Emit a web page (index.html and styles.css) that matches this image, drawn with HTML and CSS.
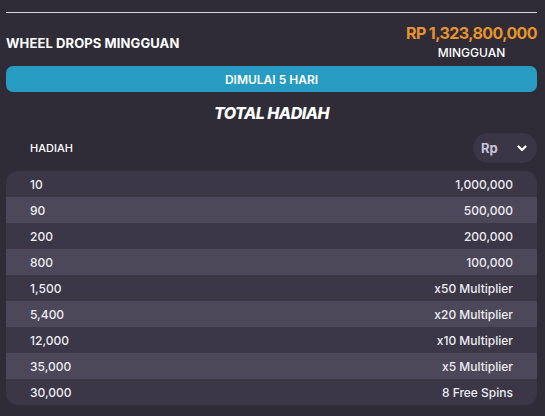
FILE: index.html
```html
<!DOCTYPE html>
<html lang="id">
<head>
<meta charset="utf-8">
<link rel="stylesheet" href="styles.css">
</head>
<body>
<div class="panel">
  <hr class="rule">
  <div class="header">
    <div class="title">WHEEL DROPS MINGGUAN</div>
    <div class="prize">
      <div class="amount">RP 1,323,800,000</div>
      <div class="period">MINGGUAN</div>
    </div>
  </div>
  <div class="start-btn">DIMULAI 5 HARI</div>
  <div class="total">TOTAL HADIAH</div>
  <div class="table-head">
    <div class="th-label">HADIAH</div>
    <div class="currency">
      <span>Rp</span>
      <svg width="10" height="7" viewBox="0 0 10 7"><path d="M1.5 1.5 L5 5 L8.5 1.5" fill="none" stroke="#ffffff" stroke-width="2.2" stroke-linecap="round" stroke-linejoin="round"/></svg>
    </div>
  </div>
  <div class="table">
    <div class="row"><span>10</span><span>1,000,000</span></div>
    <div class="row"><span>90</span><span>500,000</span></div>
    <div class="row"><span>200</span><span>200,000</span></div>
    <div class="row"><span>800</span><span>100,000</span></div>
    <div class="row"><span>1,500</span><span>x50 Multiplier</span></div>
    <div class="row"><span>5,400</span><span>x20 Multiplier</span></div>
    <div class="row"><span>12,000</span><span>x10 Multiplier</span></div>
    <div class="row"><span>35,000</span><span>x5 Multiplier</span></div>
    <div class="row"><span>30,000</span><span>8 Free Spins</span></div>
  </div>
</div>
</body>
</html>
```
FILE: styles.css
```css
html, body {
  margin: 0;
  padding: 0;
  background: #2f2c38;
  height: 100%;
}
body {
  font-family: Inter, "Noto Sans", sans-serif;
  color: #ffffff;
}
.panel {
  padding: 12px 8px 0 6px;
}
.rule {
  border: 0;
  height: 1px;
  background: #d8d4e0;
  margin: 0;
}
.header {
  display: flex;
  justify-content: space-between;
  align-items: flex-start;
  margin-top: 11px;
}
.title {
  font-weight: 700;
  font-size: 13px;
  letter-spacing: 0.1px;
  margin-top: 11px;
}
.prize {
  display: flex;
  flex-direction: column;
  align-items: center;
}
.amount {
  color: #e8942d;
  font-weight: 700;
  font-size: 16px;
  letter-spacing: -0.6px;
  line-height: 19px;
}
.period {
  font-size: 12px;
  font-weight: 500;
  letter-spacing: 0;
  margin-top: 2px;
  line-height: 15px;
}
.start-btn {
  margin-top: 6px;
  height: 26px;
  border-radius: 7px;
  background: #279bc2;
  display: flex;
  align-items: center;
  justify-content: center;
  font-size: 12px;
  font-weight: 600;
  letter-spacing: 0;
}
.total {
  text-align: center;
  font-size: 16px;
  font-weight: 800;
  font-style: italic;
  letter-spacing: -0.5px;
  margin-top: 11px;
  line-height: 20px;
}
.table-head {
  display: flex;
  justify-content: space-between;
  align-items: center;
  margin-top: 10px;
  padding-left: 24px;
}
.th-label {
  font-size: 11px;
  font-weight: 500;
  letter-spacing: 0;
}
.currency {
  width: 64px;
  height: 30px;
  box-sizing: border-box;
  border-radius: 15px;
  background: #3a3646;
  display: flex;
  align-items: center;
  justify-content: space-between;
  padding: 0 10px 0 8px;
  font-size: 13px;
  font-weight: 700;
  color: #c9c4d8;
}
.table {
  margin-top: 8px;
  border-radius: 12px;
  overflow: hidden;
}
.row {
  height: 26px;
  display: flex;
  align-items: center;
  justify-content: space-between;
  padding: 0 24px 0 24px;
  font-size: 12px;
  font-weight: 500;
  letter-spacing: 0;
  color: #eeecf2;
}
.row:nth-child(odd) {
  background: #3b3747;
}
.row:nth-child(even) {
  background: #4c4859;
}
```
